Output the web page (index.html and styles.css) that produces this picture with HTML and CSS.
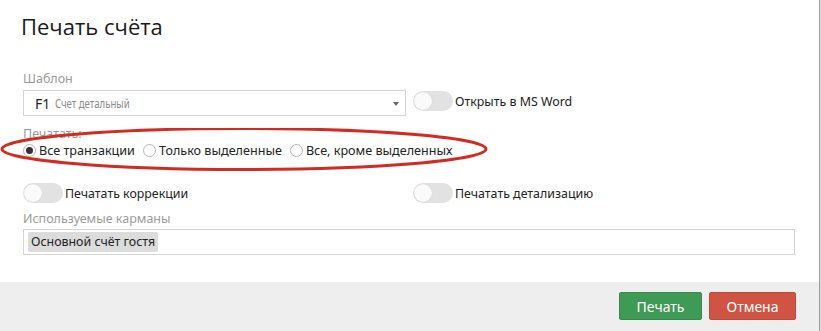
FILE: index.html
```html
<!DOCTYPE html>
<html lang="ru">
<head>
<meta charset="utf-8">
<link rel="stylesheet" href="styles.css">
</head>
<body>
<div class="dialog">
  <div class="head"><h1 class="title">Печать счёта</h1></div>
  <div class="content">
    <div class="grid">
      <div class="field">
        <div class="lbl">Шаблон</div>
        <div class="select">
          <span class="code">F1</span><span class="name">Счет детальный</span>
          <span class="caret"></span>
        </div>
      </div>
      <div class="toggle-line toggle-top"><span class="toggle"><span class="knob"></span></span><span class="tlabel">Открыть в MS Word</span></div>
    </div>
    <div class="lbl lbl-print">Печатать:</div>
    <div class="radios">
      <label class="radio"><span class="circle checked"></span><span>Все транзакции</span></label>
      <label class="radio"><span class="circle"></span><span>Только выделенные</span></label>
      <label class="radio"><span class="circle"></span><span>Все, кроме выделенных</span></label>
      <svg class="mark" width="500" height="48" viewBox="0 0 500 48"><ellipse cx="244" cy="21" rx="242" ry="20.5" fill="none" stroke="#d12b22" stroke-width="3"/></svg>
    </div>
    <div class="grid grid-toggles">
      <div class="toggle-line"><span class="toggle"><span class="knob"></span></span><span class="tlabel">Печатать коррекции</span></div>
      <div class="toggle-line"><span class="toggle"><span class="knob"></span></span><span class="tlabel">Печатать детализацию</span></div>
    </div>
    <div class="lbl lbl-pockets">Используемые карманы</div>
    <div class="tags"><span class="chip">Основной счёт гостя</span></div>
  </div>
  <div class="foot">
    <button class="btn btn-ok">Печать</button>
    <button class="btn btn-cancel">Отмена</button>
  </div>
</div>
</body>
</html>
```
FILE: styles.css
```css
html, body {
  margin: 0;
  padding: 0;
  background: #d8d8d8;
}
body {
  width: 821px;
  height: 331px;
  overflow: hidden;
  font-family: "Noto Sans", "Open Sans", sans-serif;
  color: #222;
}
.dialog {
  width: 820px;
  height: 331px;
  background: #fff;
  border-right: 1px solid #a0a0a0;
  box-sizing: border-box;
  display: flex;
  flex-direction: column;
}
.head {
  padding: 11px 21px 0;
  height: 61px;
  box-sizing: border-box;
}
.title {
  margin: 0;
  font-family: "Open Sans", "Noto Sans", sans-serif;
  font-weight: 500;
  font-size: 22px;
  line-height: 30px;
  color: #1a1a1a;
}
.content {
  flex: 1;
  padding: 9px 24px 0 23px;
}
.grid {
  display: grid;
  grid-template-columns: 383px 1fr;
  column-gap: 7px;
  align-items: end;
}
.lbl {
  font-size: 12.5px;
  line-height: 18px;
  color: #9a9a9a;
}
.select {
  position: relative;
  margin-top: 2px;
  height: 26px;
  border: 1px solid #d4d4d4;
  box-sizing: border-box;
  display: flex;
  align-items: center;
  padding-left: 11px;
}
.code {
  font-size: 14px;
  color: #222;
  margin-right: 5px;
}
.name {
  display: inline-block;
  font-size: 12px;
  color: #8a8a8a;
  transform: scaleX(0.8);
  transform-origin: left center;
}
.caret {
  position: absolute;
  right: 6px;
  top: 11px;
  width: 0;
  height: 0;
  border-left: 3px solid transparent;
  border-right: 3px solid transparent;
  border-top: 4px solid #666;
}
.toggle-line {
  display: flex;
  align-items: center;
  gap: 2px;
  font-size: 12.4px;
  height: 20px;
}
.toggle-top {
  margin-bottom: 5px;
}
.toggle {
  width: 40px;
  height: 20px;
  border-radius: 10px;
  background: #e2e2e2;
  position: relative;
  flex: none;
}
.knob {
  position: absolute;
  left: 1px;
  top: 1px;
  width: 18px;
  height: 18px;
  border-radius: 50%;
  background: #fafafa;
  box-shadow: 0 0 1px rgba(0,0,0,0.15);
}
.lbl-print {
  margin-top: 10px;
  line-height: 16px;
}
.radios {
  position: relative;
  display: flex;
  align-items: center;
  height: 16px;
  font-size: 12.6px;
}
.radio {
  display: flex;
  align-items: center;
  gap: 3px;
  margin-right: 8px;
}
.circle {
  width: 13px;
  height: 13px;
  border: 1px solid #b8b8b8;
  border-radius: 50%;
  box-sizing: border-box;
  background: #fff;
  position: relative;
  flex: none;
}
.circle.checked::after {
  content: "";
  position: absolute;
  left: 2px;
  top: 2px;
  width: 7px;
  height: 7px;
  border-radius: 50%;
  background: #333;
}
.mark {
  position: absolute;
  left: -23px;
  top: -14px;
  pointer-events: none;
}
.grid-toggles {
  margin-top: 25px;
}
.lbl-pockets {
  margin-top: 7px;
}
.tags {
  margin-top: 1px;
  height: 26px;
  border: 1px solid #d4d4d4;
  box-sizing: border-box;
  display: flex;
  align-items: center;
  padding-left: 4px;
}
.chip {
  background: #dcdcdc;
  font-size: 12.4px;
  line-height: 20px;
  padding: 0 3px;
  border-radius: 2px;
}
.foot {
  height: 49px;
  background: #eeeeee;
  display: flex;
  justify-content: flex-end;
  align-items: flex-start;
  gap: 7px;
  padding: 10px 23px 0 0;
  box-sizing: border-box;
}
.btn {
  height: 28px;
  border-radius: 2px;
  font-family: "Noto Sans", "Open Sans", sans-serif;
  font-size: 14px;
  color: #fff;
  padding: 0;
  cursor: pointer;
}
.btn-ok {
  width: 83px;
  background: #3f9a55;
  border: 1px solid #378a4b;
}
.btn-cancel {
  width: 87px;
  background: #d05443;
  border: 1px solid #bd4a3b;
}
```
